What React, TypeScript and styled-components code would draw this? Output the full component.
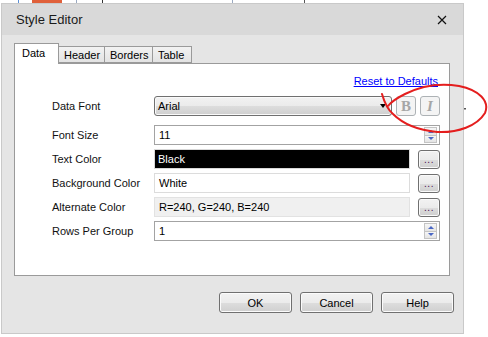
import React from 'react';
import styled, { createGlobalStyle } from 'styled-components';

const GlobalStyle = createGlobalStyle`
  html, body { margin: 0; padding: 0; background: #fff; }
  body {
    width: 488px; height: 337px; overflow: hidden;
    font-family: "Liberation Sans", Arial, sans-serif;
    font-size: 11px; color: #000;
  }
  * { box-sizing: border-box; }
`;

const Page = styled.div`
  position: relative;
  width: 488px;
  height: 337px;
  display: flex;
  flex-direction: column;
`;

const Backdrop = styled.div`
  height: 3px;
  display: flex;
  align-items: stretch;
`;

const Mark = styled.span<{ $ml: number; $w: number; $c: string }>`
  margin-left: ${p => p.$ml}px;
  width: ${p => p.$w}px;
  background: ${p => p.$c};
`;

const Dialog = styled.div`
  margin-left: 1px;
  width: 463px;
  height: 331px;
  border: 1px solid #c9c9c9;
  display: flex;
  flex-direction: column;
  background: #e5e5e5;
`;

const TitleBar = styled.div`
  height: 31px;
  background: #d9d9d9;
  display: flex;
  align-items: center;
  justify-content: space-between;
  padding-left: 14px;
  padding-right: 7px;
`;

const Title = styled.span`
  font-size: 13px;
  color: #1a1a1a;
`;

const CloseBox = styled.div`
  width: 28px;
  height: 31px;
  display: flex;
  align-items: center;
  justify-content: center;
`;

const Body = styled.div`
  flex: 1;
  display: flex;
  flex-direction: column;
  padding: 8px 0 0 12px;
`;

const TabStrip = styled.div`
  height: 20px;
  display: flex;
  align-items: flex-end;
  position: relative;
  z-index: 1;
`;

const Tab = styled.div<{ $active?: boolean; $w: number }>`
  width: ${p => p.$w}px;
  height: ${p => (p.$active ? 21 : 17)}px;
  margin-bottom: ${p => (p.$active ? -1 : 0)}px;
  border: 1px solid #9a9a9a;
  border-bottom: ${p => (p.$active ? 'none' : '1px solid #9a9a9a')};
  margin-left: ${p => (p.$active ? 0 : -1)}px;
  background: ${p => (p.$active ? '#fff' : 'linear-gradient(#f2f2f2, #e3e3e3)')};
  display: flex;
  align-items: center;
  padding-left: ${p => (p.$active ? 7 : 5)}px;
  padding-bottom: ${p => (p.$active ? 2 : 0)}px;
  font-size: 11px;
  color: #000;
`;

const Panel = styled.div`
  width: 436px;
  height: 213px;
  background: #fff;
  border: 1px solid #9a9a9a;
  display: flex;
  flex-direction: column;
  padding: 11px 11px 0 37px;
`;

const LinkRow = styled.div`
  display: flex;
  justify-content: flex-end;
  height: 13px;
`;

const Link = styled.a`
  color: #0000ff;
  text-decoration: underline;
  font-size: 11px;
  line-height: 13px;
  cursor: pointer;
`;

const Form = styled.div`
  display: flex;
  flex-direction: column;
  gap: 4px;
  margin-top: 8px;
`;

const Row = styled.div<{ $mt?: number }>`
  display: grid;
  grid-template-columns: 102px 1fr;
  align-items: center;
  height: 20px;
  margin-top: ${p => p.$mt ?? 0}px;
`;

const Label = styled.span`
  font-size: 11px;
  color: #111;
`;

const Controls = styled.div`
  display: flex;
  align-items: center;
  height: 20px;
`;

const Select = styled.div`
  width: 238px;
  height: 20px;
  border: 1px solid #707070;
  border-radius: 3px;
  background: linear-gradient(#f2f2f2 0%, #ebebeb 50%, #dddddd 51%, #cfcfcf 100%);
  box-shadow: inset 0 0 0 1px #fafafa;
  display: flex;
  align-items: center;
  justify-content: space-between;
  padding: 0 4px 0 3px;
  font-size: 11px;
`;

const Arrow = styled.span`
  width: 0; height: 0;
  border-left: 3.5px solid transparent;
  border-right: 3.5px solid transparent;
  border-top: 4px solid #000;
  margin-right: 1px;
`;

const StyleBtn = styled.div<{ $italic?: boolean }>`
  width: 20px;
  height: 20px;
  margin-left: 4px;
  border: 1px solid #adb2b5;
  border-radius: 3px;
  background: #f4f4f4;
  display: flex;
  align-items: center;
  justify-content: center;
  font-family: "Liberation Serif", "Times New Roman", serif;
  font-weight: bold;
  font-style: ${p => (p.$italic ? 'italic' : 'normal')};
  font-size: 15px;
  color: #a6a6a6;
`;

const Field = styled.div<{ $w: number; $bg?: string; $fg?: string; $border: string }>`
  width: ${p => p.$w}px;
  height: 20px;
  border: 1px solid ${p => p.$border};
  background: ${p => p.$bg ?? '#fff'};
  color: ${p => p.$fg ?? '#000'};
  display: flex;
  align-items: center;
  justify-content: space-between;
  padding: 0 2px 0 2px;
  font-size: 11px;
`;

const FieldText = styled.span<{ $hl?: boolean }>`
  padding-left: ${p => (p.$hl ? 1 : 2)}px;
`;

const Spinner = styled.div`
  width: 13px;
  height: 16px;
  display: flex;
  flex-direction: column;
`;

const SpinBtn = styled.div<{ $down?: boolean }>`
  flex: 1;
  border: 1px solid #c4c4c4;
  margin-top: ${p => (p.$down ? -1 : 0)}px;
  background: linear-gradient(#f6f6f6, #e4e4e4);
  display: flex;
  align-items: center;
  justify-content: center;
  &::after {
    content: '';
    width: 0; height: 0;
    border-left: 3.5px solid transparent;
    border-right: 3.5px solid transparent;
    ${p => (p.$down ? 'border-top: 3px solid #4a67c4;' : 'border-bottom: 3px solid #4a67c4;')}
  }
`;

const DotsBtn = styled.div`
  width: 22px;
  height: 19px;
  margin-left: 8px;
  border: 1px solid #707070;
  border-radius: 3px;
  background: linear-gradient(#f2f2f2 0%, #ebebeb 50%, #dddddd 51%, #cfcfcf 100%);
  box-shadow: inset 0 0 0 1px #fafafa;
  display: flex;
  align-items: flex-end;
  justify-content: center;
  padding-bottom: 3px;
  font-size: 10px;
  line-height: 10px;
  color: #4b1050;
  letter-spacing: 0.5px;
`;

const Footer = styled.div`
  display: flex;
  justify-content: flex-end;
  gap: 8px;
  margin-top: 16px;
  padding-right: 9px;
`;

const Button = styled.div`
  width: 73px;
  height: 21px;
  border: 1px solid #707070;
  border-radius: 3px;
  background: linear-gradient(#f2f2f2 0%, #ebebeb 50%, #dddddd 51%, #cfcfcf 100%);
  box-shadow: inset 0 0 0 1px #fbfbfb;
  display: flex;
  align-items: center;
  justify-content: center;
  font-size: 11px;
  color: #000;
`;

const Annotation = styled.svg`
  position: absolute;
  left: 0;
  top: 0;
  pointer-events: none;
`;

export default function App() {
  return (
    <>
      <GlobalStyle />
      <Page>
        <Backdrop>
          <Mark $ml={18} $w={1} $c="#5b8fd6" />
          <Mark $ml={13} $w={30} $c="#e0603a" />
          <Mark $ml={14} $w={1} $c="#9aa9c0" />
          <Mark $ml={25} $w={1} $c="#333" />
          <Mark $ml={129} $w={1} $c="#9aa9c0" />
          <Mark $ml={71} $w={1} $c="#555" />
        </Backdrop>
        <Dialog>
          <TitleBar>
            <Title>Style Editor</Title>
            <CloseBox>
              <svg width="10" height="10" viewBox="0 0 10 10">
                <path d="M1 1 L9 9 M9 1 L1 9" stroke="#111" strokeWidth="1.2" />
              </svg>
            </CloseBox>
          </TitleBar>
          <Body>
            <TabStrip>
              <Tab $active $w={45}>Data</Tab>
              <Tab $w={47}>Header</Tab>
              <Tab $w={49}>Borders</Tab>
              <Tab $w={40}>Table</Tab>
            </TabStrip>
            <Panel>
              <LinkRow>
                <Link>Reset to Defaults</Link>
              </LinkRow>
              <Form>
                <Row>
                  <Label>Data Font</Label>
                  <Controls>
                    <Select>
                      <span>Arial</span>
                      <Arrow />
                    </Select>
                    <StyleBtn>B</StyleBtn>
                    <StyleBtn $italic>I</StyleBtn>
                  </Controls>
                </Row>
                <Row $mt={5}>
                  <Label>Font Size</Label>
                  <Controls>
                    <Field $w={286} $border="#a3a3a3">
                      <FieldText>11</FieldText>
                      <Spinner>
                        <SpinBtn />
                        <SpinBtn $down />
                      </Spinner>
                    </Field>
                  </Controls>
                </Row>
                <Row>
                  <Label>Text Color</Label>
                  <Controls>
                    <Field $w={256} $border="#d8d8d8" $bg="#000" $fg="#fff">
                      <FieldText $hl>Black</FieldText>
                    </Field>
                    <DotsBtn>...</DotsBtn>
                  </Controls>
                </Row>
                <Row>
                  <Label>Background Color</Label>
                  <Controls>
                    <Field $w={256} $border="#dcdcdc">
                      <FieldText>White</FieldText>
                    </Field>
                    <DotsBtn>...</DotsBtn>
                  </Controls>
                </Row>
                <Row>
                  <Label>Alternate Color</Label>
                  <Controls>
                    <Field $w={256} $border="#e2e2e2" $bg="#f0f0f0">
                      <FieldText>R=240, G=240, B=240</FieldText>
                    </Field>
                    <DotsBtn>...</DotsBtn>
                  </Controls>
                </Row>
                <Row>
                  <Label>Rows Per Group</Label>
                  <Controls>
                    <Field $w={286} $border="#a3a3a3">
                      <FieldText>1</FieldText>
                      <Spinner>
                        <SpinBtn />
                        <SpinBtn $down />
                      </Spinner>
                    </Field>
                  </Controls>
                </Row>
              </Form>
            </Panel>
            <Footer>
              <Button>OK</Button>
              <Button>Cancel</Button>
              <Button>Help</Button>
            </Footer>
          </Body>
        </Dialog>
        <Annotation width="488" height="337" viewBox="0 0 488 337">
          <path
            d="M382 94 C384 101 387 109 393 114 C402 123 417 130 437 132 C458 133 477 126 485 113 C490 101 479 90 459 86 C441 83 421 86 405 94 C397 98 391 102 388 106"
            fill="none"
            stroke="#e41e1e"
            strokeWidth="2"
            strokeLinecap="round"
          />
          <rect x="464" y="108" width="2" height="1.5" fill="#555" />
        </Annotation>
      </Page>
    </>
  );
}
